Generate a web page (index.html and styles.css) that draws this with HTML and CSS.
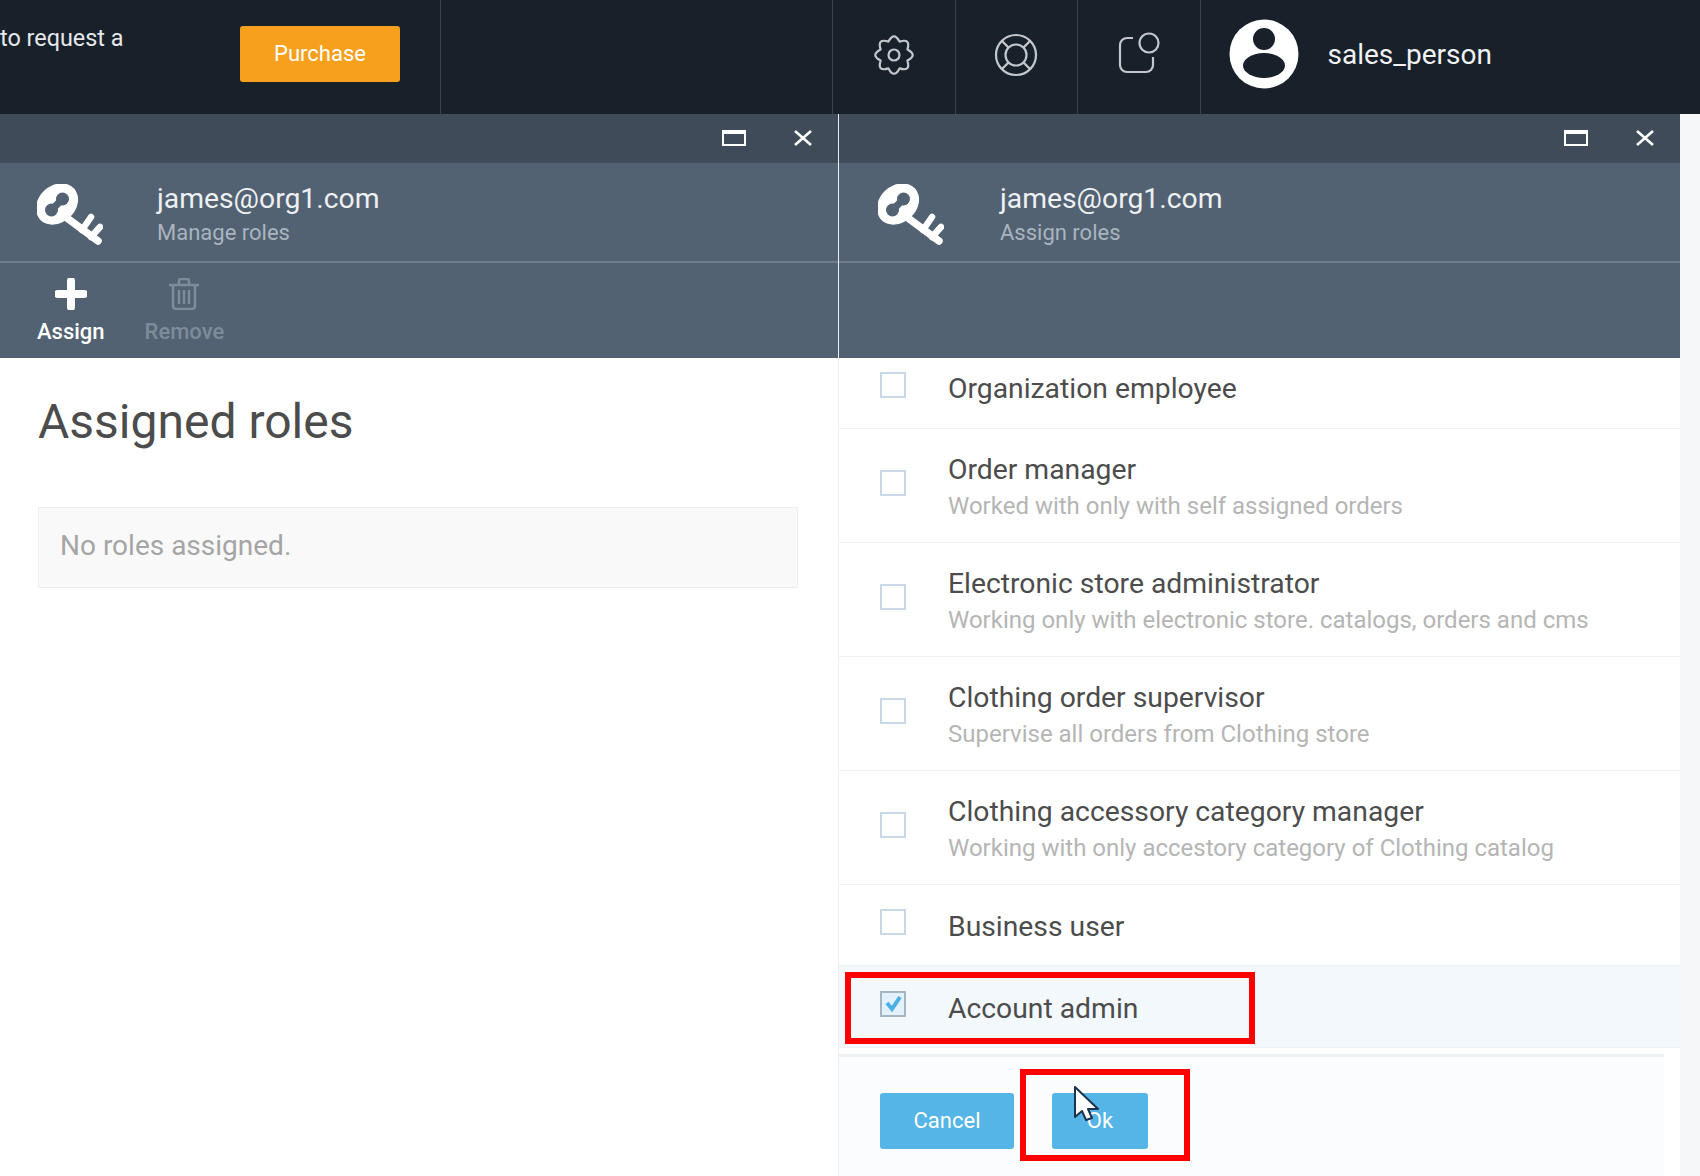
FILE: index.html
```html
<!DOCTYPE html>
<html>
    <head>
        <meta charset="utf-8">
        <meta name="viewport" content="initial-scale=1, width=device-width">
        <title>Assign roles</title>
        <link rel="stylesheet" href="styles.css">
    </head>
    <body>
    <header class="topbar">
        <div class="notice">
            <span class="notice-text">to request a</span>
            <button class="purchase" type="button">Purchase</button>
        </div>
        <div class="topbar-gap"></div>
        <div class="top-item">
            <svg width="46" height="46" viewBox="-23 -23 46 46" fill="none" stroke="#c4c7cb" stroke-width="2.2" stroke-linejoin="round">
                <path d="M13.4 -5.55 Q24 0 13.4 5.55 Q17 17 5.55 13.4 Q0 24 -5.55 13.4 Q-17 17 -13.4 5.55 Q-24 0 -13.4 -5.55 Q-17 -17 -5.55 -13.4 Q0 -24 5.55 -13.4 Q17 -17 13.4 -5.55Z"/>
                <circle r="5.5"/>
            </svg>
        </div>
        <div class="top-item">
            <svg width="46" height="46" viewBox="-23 -23 46 46" fill="none" stroke="#c4c7cb" stroke-width="2.2">
                <circle r="20"/>
                <circle r="10.5"/>
                <path d="M7.4 -7.4 L14 -14 M7.4 7.4 L14 14 M-7.4 7.4 L-14 14 M-7.4 -7.4 L-14 -14"/>
            </svg>
        </div>
        <div class="top-item">
            <svg width="42" height="46" viewBox="0 0 42 46" fill="none" stroke="#c4c7cb" stroke-width="2.2">
                <circle cx="31" cy="11" r="9.5"/>
                <path d="M15 6 H9 a7 7 0 0 0 -7 7 V33 a7 7 0 0 0 7 7 H28 a7 7 0 0 0 7 -7 V25"/>
            </svg>
        </div>
        <div class="user">
            <svg width="70" height="70" viewBox="-35 -35 70 70">
                <circle r="34.5" fill="#ffffff"/>
                <circle cy="-15" r="11" fill="#18202a"/>
                <ellipse cy="11.5" rx="21" ry="12.5" fill="#18202a"/>
            </svg>
            <span class="user-name">sales_person</span>
        </div>
    </header>

    <main class="panels">
        <section class="panel panel-left">
            <div class="win-head">
                <span class="win-max"></span>
                <svg class="win-close" width="20" height="16" viewBox="0 0 20 16" stroke="#ffffff" stroke-width="2.6"><path d="M2 1 L18 15 M18 1 L2 15"/></svg>
            </div>
            <div class="blade-head">
                <svg class="key" width="66" height="62" viewBox="0 0 66 62">
                    <use href="#key-shape"/>
                </svg>
                <div class="blade-titles">
                    <div class="blade-title">james@org1.com</div>
                    <div class="blade-sub">Manage roles</div>
                </div>
            </div>
            <div class="toolbar">
                <div class="tool">
                    <svg width="32" height="32" viewBox="0 0 32 32"><path d="M16 3 V29 M3 16 H29" stroke="#ffffff" stroke-width="8" stroke-linecap="round"/></svg>
                    <span>Assign</span>
                </div>
                <div class="tool tool-off">
                    <svg width="32" height="32" viewBox="0 0 32 32" fill="none" stroke="#7e8c9a" stroke-width="2.6">
                        <path d="M1 7 H31 M11 6 V3 a2 2 0 0 1 2 -2 H19 a2 2 0 0 1 2 2 V6"/>
                        <path d="M5 8 V28 a3 3 0 0 0 3 3 H24 a3 3 0 0 0 3 -3 V8"/>
                        <path d="M11 12 V26 M16 12 V26 M21 12 V26" stroke-width="2.4"/>
                    </svg>
                    <span>Remove</span>
                </div>
            </div>
            <div class="assigned">
                <h1>Assigned roles</h1>
                <div class="empty-box">No roles assigned.</div>
            </div>
        </section>

        <section class="panel panel-right">
            <div class="win-head">
                <span class="win-max"></span>
                <svg class="win-close" width="20" height="16" viewBox="0 0 20 16" stroke="#ffffff" stroke-width="2.6"><path d="M2 1 L18 15 M18 1 L2 15"/></svg>
            </div>
            <div class="blade-head">
                <svg class="key" width="66" height="62" viewBox="0 0 66 62">
                    <g id="key-shape">
                        <g fill="none" stroke="#ffffff" stroke-linecap="round">
                            <path d="M30 34 L61 57" stroke-width="7.5"/>
                            <path d="M45 46 L54 33 M54 53 L63 43" stroke-width="6.5"/>
                        </g>
                        <ellipse cx="20" cy="20" rx="23" ry="18.5" transform="rotate(-42 20 20)" fill="#ffffff"/>
                        <circle cx="14.5" cy="26" r="6.5" fill="#526272"/>
                        <circle cx="25.5" cy="15" r="6.5" fill="#526272"/>
                        <path d="M14.5 26 L25.5 15" stroke="#526272" stroke-width="7"/>
                    </g>
                </svg>
                <div class="blade-titles">
                    <div class="blade-title">james@org1.com</div>
                    <div class="blade-sub">Assign roles</div>
                </div>
            </div>
            <div class="toolbar"></div>
            <div class="role-list">
                <label class="role role-first">
                    <span class="check"></span>
                    <span class="role-text"><span class="role-name">Organization employee</span></span>
                </label>
                <label class="role role-double">
                    <span class="check"></span>
                    <span class="role-text">
                        <span class="role-name">Order manager</span>
                        <span class="role-desc">Worked with only with self assigned orders</span>
                    </span>
                </label>
                <label class="role role-double">
                    <span class="check"></span>
                    <span class="role-text">
                        <span class="role-name">Electronic store administrator</span>
                        <span class="role-desc">Working only with electronic store. catalogs, orders and cms</span>
                    </span>
                </label>
                <label class="role role-double">
                    <span class="check"></span>
                    <span class="role-text">
                        <span class="role-name">Clothing order supervisor</span>
                        <span class="role-desc">Supervise all orders from Clothing store</span>
                    </span>
                </label>
                <label class="role role-double">
                    <span class="check"></span>
                    <span class="role-text">
                        <span class="role-name">Clothing accessory category manager</span>
                        <span class="role-desc">Working with only accestory category of Clothing catalog</span>
                    </span>
                </label>
                <label class="role">
                    <span class="check"></span>
                    <span class="role-text"><span class="role-name">Business user</span></span>
                </label>
                <label class="role role-selected">
                    <span class="check check-on">
                        <svg width="22" height="22" viewBox="0 0 22 22" fill="none" stroke="#4db0e5" stroke-width="4"><path d="M5 10 L10 16 L18 4"/></svg>
                    </span>
                    <span class="role-text"><span class="role-name">Account admin</span></span>
                </label>
            </div>
            <div class="blade-footer">
                <button class="btn" type="button">Cancel</button>
                <button class="btn btn-ok" type="button">Ok</button>
            </div>
        </section>
    </main>

    <div class="mark mark-role"></div>
    <div class="mark mark-ok"></div>
    <svg class="cursor" width="28" height="40" viewBox="0 0 28 40">
        <path d="M2 1 V31 L9 25 L13 34 L19 32 L15 23 L25 23 Z" fill="#ffffff" stroke="#1b3350" stroke-width="2" stroke-linejoin="round"/>
    </svg>
    </body>
</html>
```

FILE: styles.css
```css
* {
    box-sizing: border-box;
}
body {
    margin: 0;
    height: 100vh;
    overflow: hidden;
    background-color: #f6f7f9;
    font-family: Roboto, "Liberation Sans", sans-serif;
    color: #4c4c4c;
}
button {
    font-family: inherit;
    border: 0;
    cursor: pointer;
}
.topbar {
    display: flex;
    height: 114px;
    background-color: #18202a;
}
.notice {
    display: flex;
    width: 441px;
    padding-top: 26px;
    border-right: 1px solid #38414c;
}
.notice-text {
    width: 240px;
    margin-top: -1px;
    font-size: 23.4px;
    line-height: 26px;
    color: #e6e8ea;
}
.purchase {
    width: 160px;
    height: 56px;
    padding-bottom: 3px;
    border-radius: 3px;
    background-color: #f6a01e;
    color: #ffffff;
    font-size: 22px;
}
.topbar-gap {
    width: 391px;
}
.top-item {
    display: flex;
    justify-content: center;
    align-items: center;
    width: 122.5px;
    padding-bottom: 5px;
    border-left: 1px solid #38414c;
}
.user {
    display: flex;
    align-items: center;
    padding: 0 0 6px 28px;
    border-left: 1px solid #38414c;
}
.user-name {
    margin-left: 29px;
    font-size: 28px;
    color: #f0f2f4;
}
.panels {
    display: flex;
    height: 1062px;
    margin-left: -2px;
}
.panel {
    display: flex;
    flex-direction: column;
    background-color: #ffffff;
}
.panel-left {
    width: 841px;
    border-right: 1px solid #eceef1;
}
.panel-right {
    width: 841px;
}
.win-head {
    display: flex;
    justify-content: flex-end;
    align-items: center;
    gap: 47px;
    height: 49px;
    padding: 0 25px 2px 0;
    background-color: #3f4b59;
}
.win-max {
    width: 24px;
    height: 16px;
    border: 2px solid #ffffff;
    border-top-width: 4px;
}
.blade-head {
    display: flex;
    height: 100px;
    padding: 21px 0 0 39px;
    background-color: #526272;
    border-bottom: 2px solid #6f7e8d;
}
.blade-titles {
    margin-left: 54px;
}
.panel-right .blade-titles {
    margin-left: 56px;
}
.blade-title {
    margin-top: -2px;
    font-size: 28.3px;
    line-height: 34px;
    color: #eef0f2;
}
.blade-sub {
    font-size: 22px;
    line-height: 34px;
    color: #a9b4bf;
}
.toolbar {
    display: flex;
    gap: 40px;
    height: 95px;
    padding: 15px 0 0 39px;
    background-color: #526272;
}
.tool {
    display: flex;
    flex-direction: column;
    align-items: center;
    font-size: 22px;
    font-weight: 500;
    color: #ffffff;
}
.tool span {
    margin-top: 9px;
}
.tool-off {
    color: #7e8c9a;
}
.assigned {
    padding: 0 40px;
}
.assigned h1 {
    margin: 36px 0 57px;
    font-size: 48px;
    line-height: 56px;
    font-weight: 400;
}
.empty-box {
    height: 81px;
    padding-left: 21px;
    border: 1px solid #eeeeee;
    background-color: #f9f9f9;
    font-size: 28px;
    line-height: 76px;
    color: #a5a5a5;
}
.role-list {
    display: flex;
    flex-direction: column;
}
.role {
    display: flex;
    align-items: center;
    height: 81px;
    padding-left: 41px;
    border-bottom: 1px solid #eff2f5;
}
.role-first {
    height: 71px;
    padding-bottom: 12px;
}
.role-first .check {
    margin-top: -4px;
}
.role-double {
    height: 114px;
}
.role-selected {
    height: 82px;
    background-color: #f2f8fc;
}
.check {
    flex: none;
    width: 26px;
    height: 26px;
    margin-top: -6px;
    border: 2px solid #c8d8e6;
    background-color: #ffffff;
}
.check-on {
    border-color: #a4b6c4;
    background-color: #e3f1fa;
}
.check-on svg {
    display: block;
}
.role-text {
    display: flex;
    flex-direction: column;
    margin-left: 42px;
    padding-top: 4px;
}
.role-name {
    font-size: 28.3px;
    line-height: 36px;
}
.role-desc {
    font-size: 24px;
    line-height: 36px;
    color: #b5b5b5;
}
.blade-footer {
    display: flex;
    gap: 38px;
    width: 825px;
    flex: 1;
    margin-top: 6px;
    padding: 36px 0 0 41px;
    border-top: 3px solid #eef2f5;
    background-color: #fbfcfe;
}
.btn {
    width: 134px;
    height: 56px;
    padding-bottom: 2px;
    border-radius: 3px;
    background-color: #55b5e6;
    color: #ffffff;
    font-size: 22px;
}
.btn-ok {
    width: 96px;
}
.mark {
    position: absolute;
    border: 6px solid #ff0000;
}
.mark-role {
    left: 845px;
    top: 972px;
    width: 410px;
    height: 72px;
}
.mark-ok {
    left: 1020px;
    top: 1069px;
    width: 170px;
    height: 92px;
}
.cursor {
    position: absolute;
    left: 1073px;
    top: 1086px;
}
```
